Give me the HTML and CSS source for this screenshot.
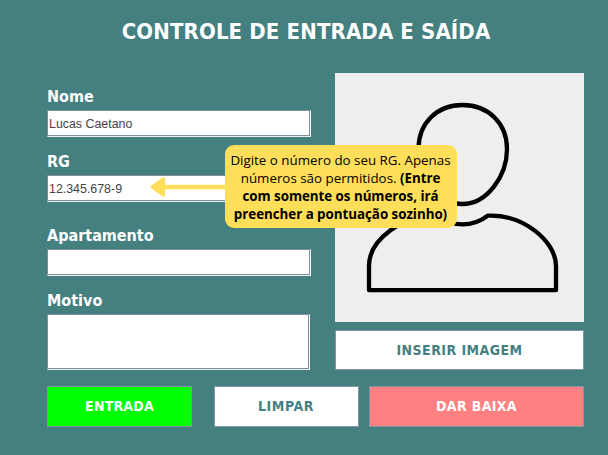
FILE: index.html
```html
<!DOCTYPE html>
<html lang="pt-BR">
<head>
<meta charset="utf-8">
<title>Controle de Entrada e Saída</title>
<link rel="stylesheet" href="styles.css">
</head>
<body>
<main class="window">
  <h1 class="title">CONTROLE DE ENTRADA E SAÍDA</h1>
  <div class="content">
    <form class="fields">
      <label class="label" for="nome">Nome</label>
      <input class="field" id="nome" type="text" value="Lucas Caetano">
      <label class="label label-rg" for="rg">RG</label>
      <div class="anchor">
        <input class="field" id="rg" type="text" value="12.345.678-9">
        <svg class="arrow" width="76" height="20" viewBox="0 0 76 20">
          <path d="M14 10H76" stroke="#ffde59" stroke-width="4.6"/>
          <path d="M3 10L14.500 1.800V18.200Z" fill="#ffde59" stroke="#ffde59" stroke-width="3" stroke-linejoin="round"/>
        </svg>
        <div class="tip">Digite o número do seu RG. Apenas<br>números são permitidos. <b>(Entre<br>com somente os números, irá<br>preencher a pontuação sozinho)</b></div>
      </div>
      <label class="label label-ap" for="ap">Apartamento</label>
      <input class="field" id="ap" type="text">
      <label class="label label-mo" for="motivo">Motivo</label>
      <textarea class="field area" id="motivo"></textarea>
    </form>
    <div class="photo-column">
      <svg class="photo" viewBox="335 73 249 249">
        <g fill="none" stroke="#000" stroke-width="4.300" stroke-linejoin="round">
          <path d="M462.500 105C488 105 507 123 507 149C507 176 487 204 462.500 204C438 204 418.500 176 418.500 149C418.500 123 437 105 462.500 105Z"/>
          <path d="M369 290.200V266C369 240 401 215.500 437.500 215.700C453 227 472 227.500 487.700 215.700C523 214 556 241 556 266V290.200Z"/>
        </g>
      </svg>
      <button class="button insert" type="button">INSERIR IMAGEM</button>
    </div>
  </div>
  <div class="actions">
    <button class="button enter" type="button">ENTRADA</button>
    <button class="button clear" type="button">LIMPAR</button>
    <button class="button leave" type="button">DAR BAIXA</button>
  </div>
</main>
</body>
</html>
```
FILE: styles.css
```css
* { box-sizing: border-box; }
body { margin: 0; background: #43807f; overflow: hidden; }
.window {
  width: 608px;
  height: 455px;
  font-family: "DejaVu Sans Condensed", "DejaVu Sans", sans-serif;
}
.title {
  margin: 0;
  padding: 16px 0 0 4px;
  height: 72.5px;
  color: #fff;
  font-size: 22px;
  font-stretch: condensed;
  letter-spacing: 0.13px;
  line-height: 32px;
  text-align: center;
  white-space: nowrap;
}
.content {
  display: grid;
  grid-template-columns: 264px 249px;
  column-gap: 24px;
  padding-left: 47px;
  height: 313px;
}
.fields { display: flex; flex-direction: column; padding-top: 13.5px; }
.label {
  height: 24px;
  color: #fff;
  font-size: 16px;
  font-weight: 700;
  font-stretch: condensed;
  line-height: 22px;
}
.label-rg { margin-top: 14px; }
.label-ap { margin-top: 23px; }
.label-mo { margin-top: 14px; }
.field {
  display: block;
  flex: none;
  width: 264px;
  height: 27px;
  margin: 0;
  padding: 0 0 0 1px;
  border: 1px solid;
  border-color: #7e8f9b #fff #eef1f4 #7e8f9b;
  border-radius: 0;
  background: #fff;
  box-shadow: inset -1px -1px #7e8f9b;
  color: #444;
  font: 12.4px "Liberation Sans", sans-serif;
  outline: none;
}
.area { width: 263px; height: 56px; resize: none; }
.anchor { position: relative; }
.arrow { position: absolute; left: 102px; top: 2px; }
.tip {
  position: absolute;
  z-index: 1;
  left: 178px;
  top: -30px;
  width: 232px;
  height: 83px;
  padding: 6px 1px 0 0;
  border-radius: 9px;
  background: #ffde59;
  color: #000;
  font: 13.35px/18px "Open Sans", sans-serif;
  text-align: center;
  white-space: nowrap;
}
.tip b { letter-spacing: -0.03px; }
.photo-column { display: flex; flex-direction: column; gap: 8px; }
.photo { width: 249px; height: 249px; background: #eee; }
.actions {
  display: flex;
  padding-left: 47px;
}
.button {
  height: 41px;
  padding: 0;
  border: 1px solid #8593a3;
  background: #fff;
  color: #43807f;
  font: 700 14px "DejaVu Sans Condensed", "DejaVu Sans", sans-serif;
  font-stretch: condensed;
}
.insert { height: 40px; letter-spacing: 0.45px; }
.enter { width: 145px; background: #0f0; color: #fff; letter-spacing: 0.2px; }
.clear { width: 145px; margin-left: 21.5px; letter-spacing: 0.6px; }
.leave { width: 215px; margin-left: 10.5px; background: #ff8080; color: #fff; letter-spacing: 0.35px; }
```
